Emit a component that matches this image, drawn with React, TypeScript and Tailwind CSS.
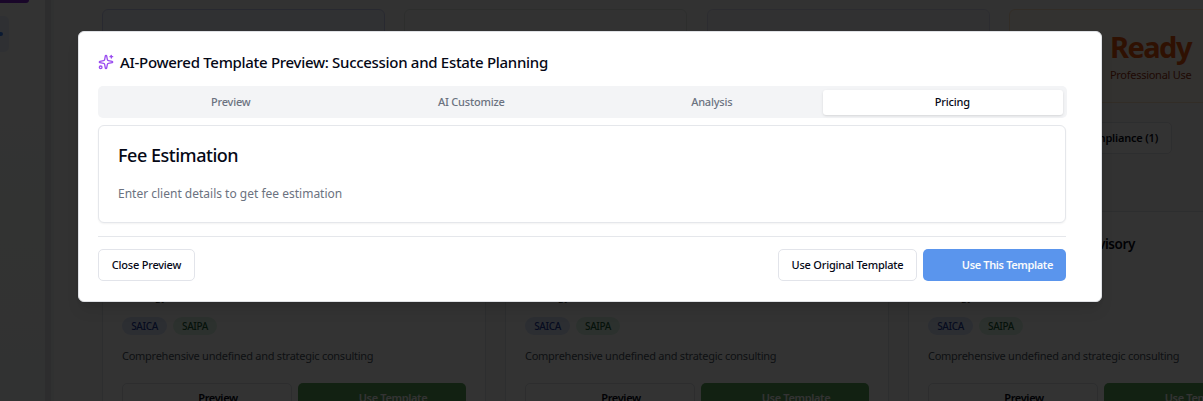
import { Sparkles } from "lucide-react";

const stats = [
  "border-[#c9cdf0] bg-[#f0f3fd]",
  "border-[#dfe5e2] bg-[#fafafa]",
  "border-[#dcdcf0] bg-[#f6f6fb]",
];

const tabs = ["Preview", "AI Customize", "Analysis"];

const templates = [
  "Succession and Estate Planning",
  "Business Consulting Service",
  "Strategic Management Advisory",
];

function TemplateCard({ title }: { title: string }) {
  return (
    <div className="flex h-[240px] w-[384px] shrink-0 flex-col rounded-md border border-[#e2e4e8] bg-white px-[19px] pt-[20px]">
      <div className="flex h-[24px] w-[207px] justify-end text-[13.5px] leading-[24px] font-semibold tracking-[-0.4px] whitespace-nowrap text-[#050816]">
        {title}
      </div>
      <div className="mt-[31px] h-[18px] pl-[2px] text-[11px] leading-[18px] text-[#222]">Strategy</div>
      <div className="mt-[12px] flex h-[18px] gap-[6px] text-[10px] leading-[18px] font-medium tracking-[-0.35px]">
        <span className="w-[45px] rounded-full bg-[#dbe5fb] text-center text-[#1e3a9a]">SAICA</span>
        <span className="w-[44px] rounded-full bg-[#dcf5e4] text-center text-[#1c5c38]">SAIPA</span>
      </div>
      <p className="mt-[12px] text-[11px] leading-[18px] tracking-[-0.26px] whitespace-nowrap text-[#4b5563]">
        Comprehensive undefined and strategic consulting
      </p>
      <div className="mt-[18px] flex gap-[6px] text-[11px] leading-[28px] font-semibold tracking-[-0.35px]">
        <div className="h-[32px] w-[170px] rounded-[5px] border border-[#dfe1e6] pl-[22px] text-center text-[#050816]">
          Preview
        </div>
        <div className="h-[32px] w-[168px] rounded-[5px] bg-[#5aa35a] pl-[22px] text-center leading-[30px] text-white">
          Use Template
        </div>
      </div>
    </div>
  );
}

function Background() {
  return (
    <div className="flex h-full w-full overflow-hidden bg-[#fafafa]">
      <aside className="flex w-[45px] shrink-0 flex-col bg-gradient-to-b from-white to-[#f5faf7]">
        <div className="h-[3px] w-[29px] rounded-br-[6px] bg-[#7c22ce] shadow-md" />
        <div className="mt-[13px] flex h-[36px] w-[9px] items-center rounded-r-[5px] bg-[#eaf1fe]">
          <span className="h-[4px] w-[3px] rounded-r-full bg-[#3b82f6]" />
        </div>
      </aside>
      <div className="w-[6px] shrink-0 bg-[#dfe2e5]" />
      <div className="w-[3px] shrink-0 bg-[#eff2f6]" />
      <main className="w-[1149px] shrink-0 overflow-hidden pt-[9px] pl-[48px]">
        <div className="flex w-[1300px] gap-[19.3px]">
          {stats.map((s) => (
            <div key={s} className={`h-[94px] w-[283px] shrink-0 rounded-md border ${s}`} />
          ))}
          <div className="h-[94px] w-[283px] shrink-0 rounded-md border border-[#fbe0c0] bg-[#fff7ed] pt-[19px] pl-[100px]">
            <div className="text-[29px] leading-[35px] font-bold tracking-[-1.5px] text-[#ea580c]">Ready</div>
            <div className="mt-[2px] text-[11px] leading-[18px] tracking-[-0.27px] text-[#9a3412]">Professional Use</div>
          </div>
        </div>
        <div className="mt-[19px] flex h-[32px] w-[1070px] justify-end">
          <div className="rounded-[5px] border border-[#e2e4e8] bg-white px-[13px] text-[11px] leading-[30px] font-semibold tracking-[-0.2px] text-[#050816]">
            Compliance (1)
          </div>
        </div>
        <div className="mt-[57px] flex w-[1300px] gap-[19px]">
          {templates.map((t) => (
            <TemplateCard key={t} title={t} />
          ))}
        </div>
      </main>
    </div>
  );
}

function Dialog() {
  return (
    <div className="flex h-[271px] w-[1024px] flex-col rounded-[6px] border border-[#dfe1e5] bg-white pt-[19px] pr-[35px] pl-[19px] shadow-lg">
      <div className="flex h-[22px] items-center gap-[6px]">
        <Sparkles className="size-[16px] text-[#9b4df0]" strokeWidth={2} />
        <h2 className="text-[15px] leading-[22px] font-medium tracking-[-0.3px] whitespace-nowrap text-[#050816]">
          AI-Powered Template Preview: Succession and Estate Planning
        </h2>
      </div>
      <div className="mt-[13px] grid h-[32px] w-[969px] grid-cols-4 rounded-[5px] bg-[#f3f4f6] pt-[4px] pr-[4px] pb-[3px] pl-[3px] text-center text-[11px] leading-[24px] font-medium tracking-[-0.2px] text-[#6b7280]">
        {tabs.map((t) => (
          <div key={t} className="pl-[19px]">
            {t}
          </div>
        ))}
        <div className="rounded-[3px] bg-white pl-[19px] text-[#050816] shadow-sm">Pricing</div>
      </div>
      <section className="mt-[7px] h-[98px] rounded-[6px] border border-[#e5e7eb] bg-white pt-[17px] pl-[19px] shadow-xs">
        <h3 className="text-[18px] leading-[24px] font-medium tracking-[-0.47px] text-[#050816]">Fee Estimation</h3>
        <p className="mt-[17px] text-[12px] leading-[20px] text-[#6b7280]">Enter client details to get fee estimation</p>
      </section>
      <div className="mt-[13px] flex justify-between border-t border-[#e5e7eb] pt-[12px] text-[11px] leading-[30px] font-medium tracking-[-0.22px] text-[#050816]">
        <button className="h-[32px] w-[97px] rounded-[5px] border border-[#e2e4ea]">Close Preview</button>
        <div className="flex gap-[6px]">
          <button className="h-[32px] w-[139px] rounded-[5px] border border-[#e2e4ea]">Use Original Template</button>
          <button className="h-[32px] w-[143px] rounded-[5px] bg-[#5a95ed] pr-[13px] text-right font-semibold tracking-[-0.37px] text-[#f8fafc]">
            Use This Template
          </button>
        </div>
      </div>
    </div>
  );
}

export default function App() {
  return (
    <div className="relative h-[401px] w-[1203px] overflow-hidden font-['Noto_Sans','Open_Sans',sans-serif]">
      <Background />
      <div className="absolute inset-0 bg-black/80 pt-[31px] pl-[78px]">
        <Dialog />
      </div>
    </div>
  );
}
